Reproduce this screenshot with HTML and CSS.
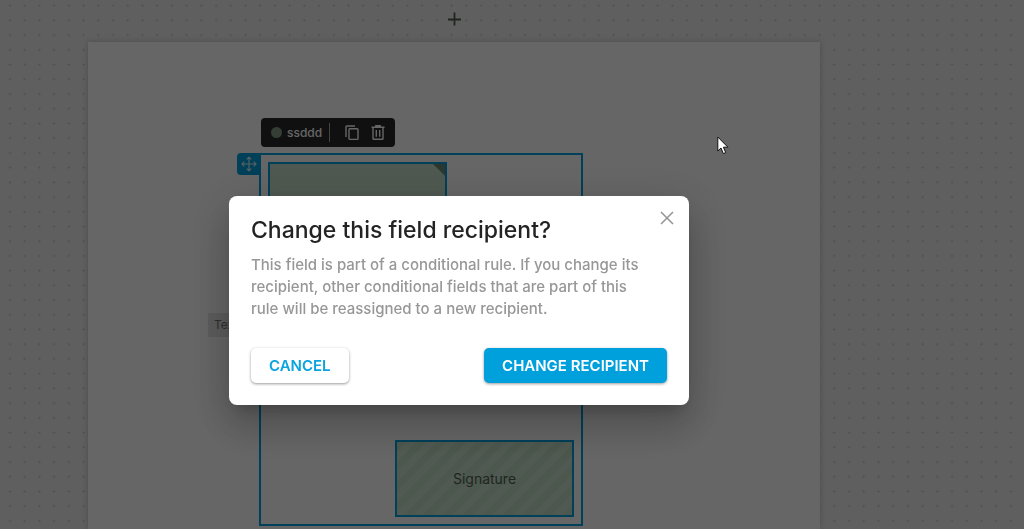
FILE: index.html
```html
<!DOCTYPE html>
<html lang="en">
<head>
<meta charset="utf-8">
<title>Change this field recipient?</title>
<link rel="stylesheet" href="styles.css">
</head>
<body>
<main class="editor">
  <svg class="dots" aria-hidden="true">
    <defs>
      <pattern id="dot" x="2.6" y="-1.7" width="14.72" height="14.72" patternUnits="userSpaceOnUse">
        <circle cx="7.36" cy="7.36" r="1.1" fill="#c4c4c4"/>
      </pattern>
    </defs>
    <rect width="100%" height="100%" fill="url(#dot)"/>
  </svg>
  <button class="add" type="button" aria-label="Add page">
    <svg width="14" height="14" viewBox="0 0 14 14" fill="none" stroke="#505850" stroke-width="1.8"><path d="M7.500 0.5v13M1 7.500h13"/></svg>
  </button>
  <section class="sheet">
    <div class="text-field">Text</div>
    <div class="group">
      <div class="toolbar">
        <span class="swatch"></span>
        <span class="name">ssddd</span>
        <span class="rule"></span>
        <button class="tool" type="button" aria-label="Duplicate">
          <svg width="14" height="16" viewBox="0 0 14 16" fill="none" stroke="#fff" stroke-width="1.4"><path d="M10 1H1.8Q1 1 1 1.8V12M4.8 3.8h7.4q.8 0 .8.8v9q0 .8-.8.8H4.8q-.8 0-.8-.8v-9q0-.8.8-.8z"/></svg>
        </button>
        <button class="tool" type="button" aria-label="Delete">
          <svg width="14" height="16" viewBox="0 0 14 16" fill="none" stroke="#fff" stroke-width="1.4"><path d="M.5 2.2h13M4.8 2V.8h4.4V2M2 2.5v11q0 .8.8.8h8.400q.8 0 .8-.8v-11M5.300 5v6.800M8.700 5v6.800"/></svg>
        </button>
      </div>
      <button class="handle" type="button" aria-label="Move">
        <svg width="16" height="16" viewBox="0 0 16 16" fill="none" stroke="#d8eef7" stroke-width="1.2"><path d="M8 1v14M1 8h14M5.700 3.300 8 1l2.300 2.300M5.700 12.700 8 15l2.300-2.300M3.300 5.700 1 8l2.300 2.300M12.700 5.700 15 8l-2.300 2.300"/></svg>
      </button>
      <div class="field field-first"></div>
      <div class="field field-signature">Signature</div>
    </div>
  </section>
</main>
<div class="scrim">
  <div class="dialog" role="dialog" aria-modal="true" aria-labelledby="title">
    <button class="close" type="button" aria-label="Close">
      <svg width="14" height="14" viewBox="0 0 14 14" fill="none" stroke="#949494" stroke-width="1.5"><path d="M1 1l12 12M13 1 1 13"/></svg>
    </button>
    <h1 class="title" id="title">Change this field recipient?</h1>
    <p class="text">This field is part of a conditional rule. If you change its recipient, other conditional fields that are part of this rule will be reassigned to a new recipient.</p>
    <div class="actions">
      <button class="btn" type="button">CANCEL</button>
      <button class="btn btn-primary" type="button">CHANGE RECIPIENT</button>
    </div>
  </div>
</div>
<svg class="cursor" width="12" height="19" viewBox="0 0 12 19" aria-hidden="true"><path d="M.8 1v14l3.200-3 2.300 5.600 2.400-1L6.400 11.200h4.500z" fill="#fff" stroke="#111" stroke-width="1"/></svg>
</body>
</html>
```
FILE: styles.css
```css
* { box-sizing: border-box; }
body {
  margin: 0;
  font-family: Inter, "Open Sans", sans-serif;
}
button {
  border: 0;
  padding: 0;
  background: none;
  font: inherit;
}
svg { display: block; }

.editor {
  position: relative;
  display: flex;
  flex-direction: column;
  min-height: 100vh;
  padding: 0 204px 0 88px;
  overflow: hidden;
  background: #ededed;
}
.dots {
  position: absolute;
  inset: 0;
  width: 100%;
  height: 100%;
}
.add {
  position: relative;
  align-self: center;
  padding: 12px 4px 16px;
}
.sheet {
  position: relative;
  flex: 1;
  min-height: 487px;
  background: #fff;
  box-shadow: 0 0 6px rgba(0, 0, 0, 0.2);
}

/* Fields placed on the document */
.text-field {
  position: absolute;
  left: 120px;
  top: 271px;
  width: 80px;
  padding: 4px 6px;
  background: #e6e6e6;
  color: #777;
  font-size: 12px;
  line-height: 16px;
}
.group {
  position: absolute;
  left: 171px;
  top: 111px;
  width: 324px;
  height: 373px;
  border: 2px solid #00a0dd;
}
.toolbar {
  position: absolute;
  left: 0;
  top: -37px;
  display: flex;
  align-items: center;
  width: 134px;
  height: 29px;
  padding: 0 10px;
  border-radius: 4px;
  background: #2a2a2a;
  color: #fff;
  font-size: 12px;
  font-weight: 500;
}
.swatch {
  width: 11px;
  height: 11px;
  margin-right: 5px;
  border-radius: 50%;
  background: #829c86;
}
.name { flex: 1; }
.rule {
  width: 1px;
  height: 19px;
  background: #aaa;
}
.tool { margin-left: 12px; }
.rule + .tool { margin-left: 15px; }
.handle {
  position: absolute;
  left: -24px;
  top: -2px;
  padding: 3px 4px;
  border-radius: 4px 0 0 4px;
  background: #00a0dd;
}
.field {
  position: absolute;
  display: grid;
  place-items: center;
  width: 179px;
  height: 77px;
  border: 2px solid #00a0dd;
  background: #c6dfca;
  color: #505c52;
  font-size: 14px;
}
.field-first {
  left: 7px;
  top: 7px;
}
.field-first::after {
  content: "";
  position: absolute;
  right: 0;
  top: 0;
  width: 12px;
  height: 12px;
  background: #6f8c73;
  clip-path: polygon(0 0, 100% 0, 100% 100%);
}
.field-signature {
  left: 134px;
  top: 285px;
  background: repeating-linear-gradient(135deg, #bddac2 0 7px, #c9e2cd 7px 14px);
}

/* Confirmation dialog */
.scrim {
  position: fixed;
  inset: 0;
  display: grid;
  place-items: center;
  padding: 72px 106px 0 0;
  background: rgba(0, 0, 0, 0.6);
}
.dialog {
  position: relative;
  width: 460px;
  max-width: 100%;
  padding: 20px 22px 22px;
  border-radius: 8px;
  background: #fff;
  box-shadow:
    0 11px 15px -7px rgba(0, 0, 0, 0.2),
    0 24px 38px 3px rgba(0, 0, 0, 0.14),
    0 9px 46px 8px rgba(0, 0, 0, 0.12);
}
.close {
  position: absolute;
  right: 11px;
  top: 11px;
  padding: 4px;
}
.title {
  margin: 0 0 10px;
  color: #232323;
  font-size: 23px;
  font-weight: 500;
  line-height: 28px;
}
.text {
  margin: 0 0 28px;
  padding-right: 16px;
  color: #979797;
  font-size: 15px;
  font-weight: 500;
  line-height: 22px;
}
.actions {
  display: flex;
  justify-content: space-between;
}
.btn {
  height: 35px;
  padding: 0 18px;
  border-radius: 5px;
  background: #fff;
  box-shadow: 0 1px 3px rgba(0, 0, 0, 0.4);
  color: #0ba4df;
  font-size: 15px;
  font-weight: 600;
  line-height: 34px;
}
.btn-primary {
  background: #00a0dd;
  color: #fff;
}

.cursor {
  position: absolute;
  left: 717px;
  top: 136px;
}
```
